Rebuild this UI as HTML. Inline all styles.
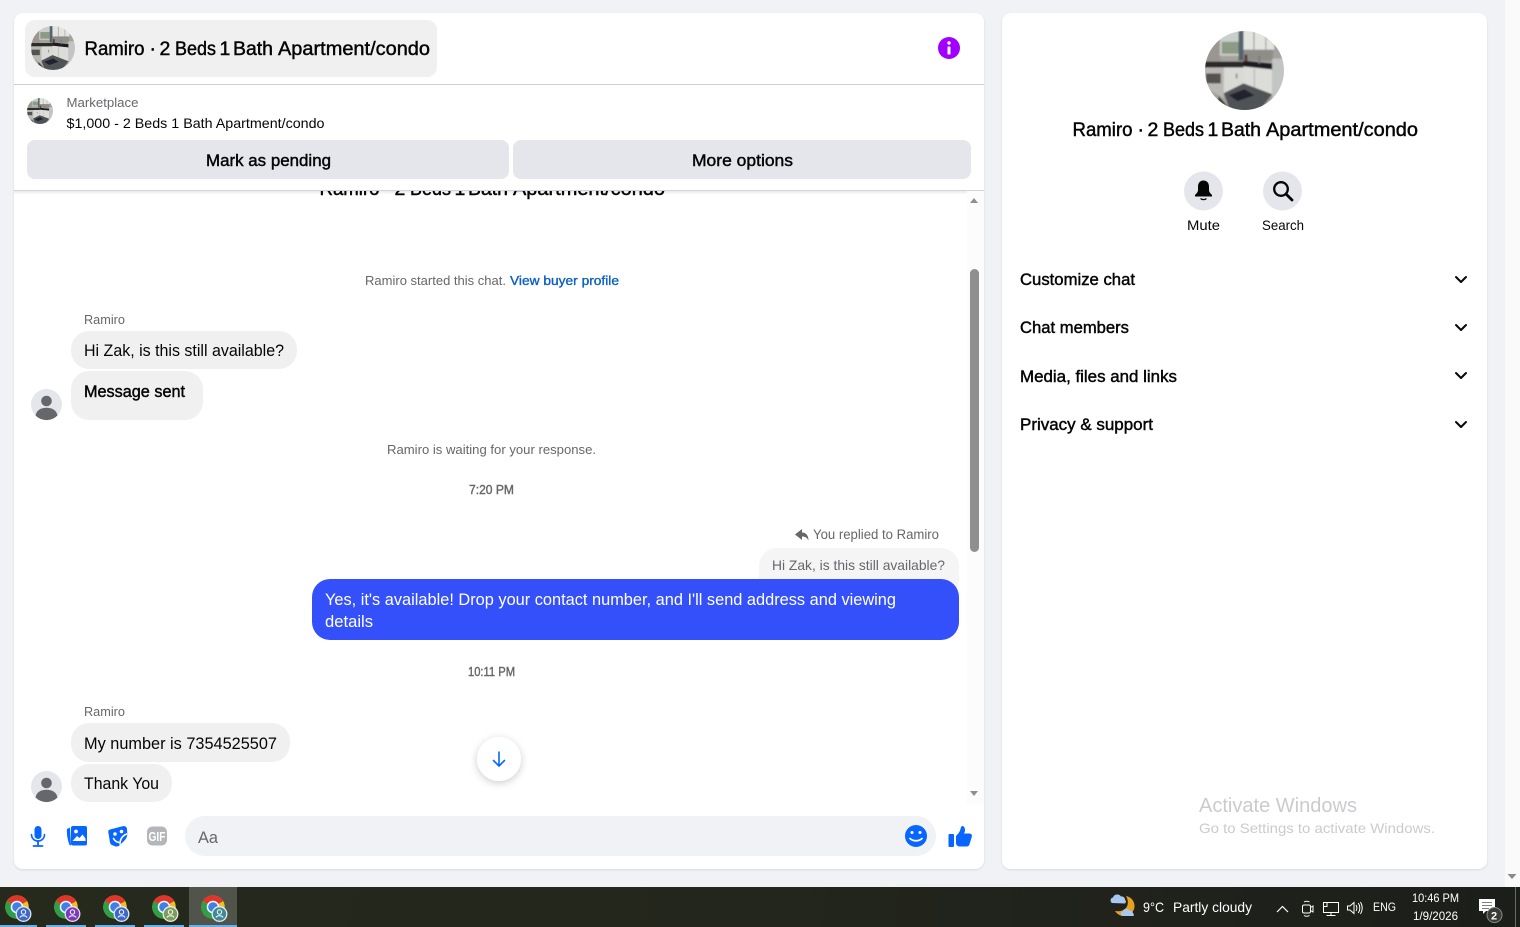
<!DOCTYPE html>
<html><head><meta charset="utf-8"><title>Chat</title>
<style>
html,body{margin:0;padding:0;width:1520px;height:927px;overflow:hidden;background:#f0f2f5}
svg{display:block}
text{font-family:"Liberation Sans",sans-serif;fill:#050505;white-space:pre}
.sb{stroke:#050505;stroke-width:.45}
.g{fill:#65676b}
.gs{fill:#65676b;stroke:#65676b;stroke-width:.4}
</style></head><body>
<svg width="1520" height="927" viewBox="0 0 1520 927" xmlns="http://www.w3.org/2000/svg">
<defs>
<clipPath id="kc"><circle cx="40" cy="40" r="40"/></clipPath>
<clipPath id="top"><rect x="14" y="191" width="950" height="9"/></clipPath>
<filter id="sh" x="-40%" y="-40%" width="180%" height="180%"><feDropShadow dx="0" dy="2" stdDeviation="4" flood-color="#000" flood-opacity=".2"/></filter>
<filter id="sh2" x="-2%" y="-2%" width="104%" height="104%"><feDropShadow dx="0" dy="1" stdDeviation="1" flood-color="#000" flood-opacity=".1"/></filter>
<filter id="bl"><feGaussianBlur stdDeviation=".7"/></filter>
<linearGradient id="hs" x1="0" x2="0" y1="0" y2="1"><stop offset="0" stop-color="#000" stop-opacity=".08"/><stop offset="1" stop-color="#000" stop-opacity="0"/></linearGradient>
<g id="kitchen"><g clip-path="url(#kc)"><g filter="url(#bl)">
<rect x="-2" y="-2" width="84" height="84" fill="#a5a29c"/>
<rect x="-2" y="-2" width="18" height="34" fill="#9b9790"/>
<rect x="15" y="-2" width="20" height="27" fill="#c9cfca"/>
<rect x="17" y="11" width="17" height="12" fill="#8d9a84"/>
<rect x="34" y="-2" width="5" height="32" fill="#55636c"/>
<rect x="39" y="-2" width="31" height="21" fill="#e3e3e0"/>
<rect x="49" y="-2" width="1.200" height="21" fill="#9c9c98"/><rect x="61" y="-2" width="1.200" height="21" fill="#a3a39f"/>
<rect x="39" y="19" width="30" height="11" fill="#8f8d88"/>
<rect x="-2" y="31" width="41" height="6" fill="#2a2a2c"/>
<path d="M39 30 69 33V39L39 36Z" fill="#1f1f22"/>
<rect x="40" y="24" width="3" height="7" fill="#5b3a36"/>
<rect x="54" y="25" width="2" height="8" fill="#7d7d7d"/>
<path d="M-2 37H19V68L-2 56Z" fill="#b9b8b4"/>
<rect x="1" y="43" width="15" height="10" fill="#55534f"/>
<path d="M19 37H39V54L19 63Z" fill="#d9d9d5"/>
<path d="M39 36 68 39V64L39 53Z" fill="#dcdcd8"/>
<path d="M50 38V58" stroke="#a5a5a0" stroke-width=".8"/>
<rect x="31" y="43" width="2" height="5" fill="#9a9a95"/>
<path d="M68 28H82V82H68Z" fill="#c3c5c4"/>
<path d="M19 63 39 53 68 64 54 82H26Z" fill="#4f5254"/>
<path d="M24 65 40 59 50 65 33 71Z" fill="#20232e"/>
<path d="M14 66 28 82H10Z" fill="#3d3d3b"/>
</g></g></g>
<g id="person"><circle cx="15.500" cy="15.500" r="15.500" fill="#e4e6eb"/><circle cx="15.500" cy="12" r="5.300" fill="#65676b"/><path d="M4.500 26.500C5.500 21 10 18.700 15.500 18.700S25.500 21 26.500 26.500A15.500 15.500 0 0 1 4.500 26.500Z" fill="#65676b"/></g>
<g id="chev"><path d="M-5-2.500 0 2.500 5-2.500" fill="none" stroke="#050505" stroke-width="2" stroke-linecap="round" stroke-linejoin="round"/></g>
<g id="chrome">
<circle r="11.800" fill="#eec21c"/>
<path d="M0 0-10.200-5.900A11.800 11.800 0 0 1 10.200-5.900Z" fill="#e0352b"/>
<path d="M0 0-10.200-5.900A11.800 11.800 0 0 0 0 11.800L3 5Z" fill="#2f9e48"/>
<circle r="6.300" fill="#f5f5f5"/><circle r="4.800" fill="#3f7fe8"/>
</g>
</defs>

<!-- page -->
<rect width="1520" height="927" fill="#f0f2f5"/>
<rect x="1505" y="0" width="15" height="887" fill="#fafafa"/>
<path d="M1507.500 874h9l-4.500 5z" fill="#8a8a8a"/>

<!-- cards -->
<rect x="14" y="13" width="970" height="856" rx="9" fill="#fff" filter="url(#sh2)"/>
<rect x="1002" y="13" width="485" height="856" rx="9" fill="#fff" filter="url(#sh2)"/>

<!-- chat scrollbar -->
<rect x="967" y="191" width="17" height="614" fill="#fcfcfc"/>
<rect x="970" y="269" width="9" height="283" rx="4.500" fill="#8f8f8f"/>
<path d="M970 203h8l-4-5zM970 791h8l-4 5z" fill="#8f8f8f"/>

<!-- header -->
<rect x="25" y="20" width="412" height="57" rx="10" fill="#f0f0f1"/>
<use href="#kitchen" transform="translate(31 26) scale(.55)"/>
<g font-size="19.500" class="sb">
<text x="84.500" y="55" textLength="60" lengthAdjust="spacingAndGlyphs">Ramiro</text>
<text x="149.500" y="55">·</text>
<text x="159.500" y="55">2</text>
<text x="175" y="55" textLength="41" lengthAdjust="spacingAndGlyphs">Beds</text>
<text x="219.500" y="55">1</text>
<text x="233" y="55" textLength="40" lengthAdjust="spacingAndGlyphs">Bath</text>
<text x="278" y="55" textLength="152" lengthAdjust="spacingAndGlyphs">Apartment/condo</text>
</g>
<circle cx="949" cy="48" r="11" fill="#a100ff"/>
<circle cx="949" cy="43" r="1.700" fill="#fff"/><rect x="947.500" y="46.500" width="3" height="8" rx=".8" fill="#fff"/>
<rect x="14" y="84" width="970" height="1" fill="#ced0d4"/>

<use href="#kitchen" transform="translate(27 98) scale(.325)"/>
<text x="66.500" y="107" font-size="13" textLength="72" lengthAdjust="spacingAndGlyphs" class="g">Marketplace</text>
<text x="66.500" y="128" font-size="14" textLength="258" lengthAdjust="spacingAndGlyphs">$1,000 - 2 Beds 1 Bath Apartment/condo</text>
<rect x="27" y="140" width="482" height="39" rx="8" fill="#e4e6eb"/>
<rect x="513" y="140" width="458" height="39" rx="8" fill="#e4e6eb"/>
<text x="206" y="166" font-size="17" textLength="125" lengthAdjust="spacingAndGlyphs" class="sb">Mark as pending</text>
<text x="692" y="166" font-size="17" textLength="101" lengthAdjust="spacingAndGlyphs" class="sb">More options</text>
<rect x="14" y="190" width="970" height="1" fill="#d2d4d8"/>

<!-- messages -->
<g clip-path="url(#top)" font-size="19.500" class="sb">
<text x="319.500" y="195" textLength="60" lengthAdjust="spacingAndGlyphs">Ramiro</text>
<text x="384.500" y="195">·</text>
<text x="394.500" y="195">2</text>
<text x="410" y="195" textLength="41" lengthAdjust="spacingAndGlyphs">Beds</text>
<text x="454.500" y="195">1</text>
<text x="468" y="195" textLength="40" lengthAdjust="spacingAndGlyphs">Bath</text>
<text x="513" y="195" textLength="152" lengthAdjust="spacingAndGlyphs">Apartment/condo</text>
</g>
<rect x="14" y="191" width="953" height="4" fill="url(#hs)"/>
<text x="365" y="285" font-size="13" textLength="141" lengthAdjust="spacingAndGlyphs" class="g">Ramiro started this chat.</text>
<text x="510" y="285" font-size="13" textLength="109" lengthAdjust="spacingAndGlyphs" style="fill:#0a5fc4;stroke:#0a5fc4;stroke-width:.35">View buyer profile</text>

<text x="84" y="324" font-size="12.500" textLength="41" lengthAdjust="spacingAndGlyphs" class="g">Ramiro</text>
<rect x="71" y="331" width="226" height="38" rx="18" fill="#f0f0f0"/>
<text x="84" y="356" font-size="17" textLength="200" lengthAdjust="spacingAndGlyphs">Hi Zak, is this still available?</text>
<rect x="71" y="371" width="132" height="49" rx="18" fill="#f0f0f0"/>
<text x="84" y="397" font-size="17" textLength="101" lengthAdjust="spacingAndGlyphs" class="sb">Message sent</text>
<use href="#person" transform="translate(31 389)"/>

<text x="387" y="454" font-size="13" textLength="209" lengthAdjust="spacingAndGlyphs" class="g">Ramiro is waiting for your response.</text>
<text x="469" y="494" font-size="12.500" textLength="45" lengthAdjust="spacingAndGlyphs" class="gs">7:20 PM</text>

<path d="M795 534.500 802 529v3.500c4 0 6.500 3 6.500 8-1.500-3-3.500-4-6.500-4V540z" fill="#65676b"/>
<text x="813" y="539" font-size="13.500" textLength="126" lengthAdjust="spacingAndGlyphs" class="g">You replied to Ramiro</text>
<rect x="759" y="548" width="200" height="50" rx="18" fill="#f5f5f5"/>
<text x="772" y="570" font-size="14" textLength="173" lengthAdjust="spacingAndGlyphs" class="g">Hi Zak, is this still available?</text>
<rect x="312" y="579" width="647" height="61" rx="18" fill="#3450fb"/>
<text x="325" y="605" font-size="17" textLength="571" lengthAdjust="spacingAndGlyphs" style="fill:#fff">Yes, it's available! Drop your contact number, and I'll send address and viewing</text>
<text x="325" y="627" font-size="17" textLength="48" lengthAdjust="spacingAndGlyphs" style="fill:#fff">details</text>

<text x="468" y="676" font-size="12.500" textLength="47" lengthAdjust="spacingAndGlyphs" class="gs">10:11 PM</text>

<text x="84" y="716" font-size="12.500" textLength="41" lengthAdjust="spacingAndGlyphs" class="g">Ramiro</text>
<rect x="71" y="723" width="219" height="39" rx="18" fill="#f0f0f0"/>
<text x="84" y="749" font-size="17" textLength="193" lengthAdjust="spacingAndGlyphs">My number is 7354525507</text>
<rect x="71" y="764" width="101" height="38" rx="18" fill="#f0f0f0"/>
<text x="84" y="789" font-size="17" textLength="75" lengthAdjust="spacingAndGlyphs">Thank You</text>
<use href="#person" transform="translate(31 771)"/>

<circle cx="499" cy="759" r="22" fill="#fff" filter="url(#sh)"/>
<path d="M499 752v14M493.500 760.500 499 766l5.500-5.500" fill="none" stroke="#0866ff" stroke-width="1.600" stroke-linecap="round" stroke-linejoin="round"/>

<!-- composer -->
<rect x="34.500" y="826" width="7" height="13" rx="3.500" fill="#0866ff"/>
<path d="M31.500 834.500c0 4 3 6.500 6.500 6.500s6.500-2.500 6.500-6.500" fill="none" stroke="#0866ff" stroke-width="1.600" stroke-linecap="round"/>
<path d="M38 841v4M33.500 846h9" fill="none" stroke="#0866ff" stroke-width="1.800" stroke-linecap="round"/>

<path d="M70 827.500 67 829c-.5 4 .5 11 2.500 16l1.500.5z" fill="#0866ff"/>
<rect x="71" y="826" width="16" height="19.500" rx="2" fill="#0866ff"/>
<circle cx="76" cy="831.500" r="1.900" fill="#fff"/>
<path d="M72.500 841 77 836l2.500 2 3-3.500 3 4V841z" fill="#fff"/>

<path d="M110 829.500 122.500 826.300Q126.500 825.500 127 829L127.300 834Q127.300 838 124 841L120 845Q118 847.200 115 846.200L112.500 845.300Q110.500 844.500 110 842.500L108.300 832Q108 830 110 829.500Z" fill="#0866ff"/>
<circle cx="115" cy="834" r="1.800" fill="#fff"/><circle cx="121.500" cy="831.500" r="1.800" fill="#fff"/>
<path d="M113.500 838.500c1.300 2.300 3 3.500 5 3.800M120 844c0-4.500 2-8 6.500-10" fill="none" stroke="#fff" stroke-width="1.600" stroke-linecap="round"/>

<rect x="147" y="826.500" width="20" height="19" rx="5.500" fill="#b4b6ba"/>
<text x="148.500" y="841" font-size="13" textLength="17" lengthAdjust="spacingAndGlyphs" font-weight="700" style="fill:#fff">GIF</text>

<rect x="185" y="816" width="751" height="40" rx="20" fill="#f0f2f5"/>
<text x="198" y="843" font-size="17" textLength="20" lengthAdjust="spacingAndGlyphs" class="g">Aa</text>
<circle cx="916" cy="836" r="11" fill="#0866ff"/>
<circle cx="912" cy="832.500" r="1.500" fill="#fff"/><circle cx="920" cy="832.500" r="1.500" fill="#fff"/>
<path d="M910 838.500c3 3 9 3 12 0" fill="none" stroke="#fff" stroke-width="1.700" stroke-linecap="round"/>
<rect x="948.500" y="834" width="5.500" height="13" rx="1" fill="#0866ff"/>
<path d="M956 836c2-2 4-4.500 4.500-7 .3-1.500.8-3 2-3 1.500 0 2.500 2 2.500 4 0 1.500-.5 2.500-1 3.500h5c2 0 3.500 1.200 2.800 3.200l-2.300 7.500c-.4 1.500-1.500 2.300-3 2.300h-7c-2 0-3.500-1.500-3.500-3.500z" fill="#0866ff"/>

<!-- right panel -->
<use href="#kitchen" transform="translate(1205 31) scale(.9875)"/>
<g font-size="19.500" class="sb">
<text x="1072.500" y="136" textLength="60" lengthAdjust="spacingAndGlyphs">Ramiro</text>
<text x="1137.500" y="136">·</text>
<text x="1147.500" y="136">2</text>
<text x="1163" y="136" textLength="41" lengthAdjust="spacingAndGlyphs">Beds</text>
<text x="1207.500" y="136">1</text>
<text x="1221" y="136" textLength="40" lengthAdjust="spacingAndGlyphs">Bath</text>
<text x="1266" y="136" textLength="152" lengthAdjust="spacingAndGlyphs">Apartment/condo</text>
</g>
<circle cx="1203.500" cy="191" r="19.500" fill="#e4e6eb"/>
<circle cx="1282.500" cy="191" r="19.500" fill="#e4e6eb"/>
<path d="M1203.500 180.500c-3.500 0-5.500 2.700-5.500 6v3.500c0 2-1.500 3.500-3 5v1.500h17V195c-1.500-1.500-3-3-3-5v-3.500c0-3.300-2-6-5.500-6z" fill="#050505"/>
<path d="M1201 198.800c.8 1 4.200 1 5 0" fill="none" stroke="#050505" stroke-width="1.300" stroke-linecap="round"/>
<circle cx="1281" cy="189" r="6.800" fill="none" stroke="#050505" stroke-width="2.300"/>
<path d="M1286 194l6 6" stroke="#050505" stroke-width="2.800" stroke-linecap="round"/>
<text x="1187" y="230" font-size="14" textLength="33" lengthAdjust="spacingAndGlyphs">Mute</text>
<text x="1262" y="230" font-size="14" textLength="42" lengthAdjust="spacingAndGlyphs">Search</text>

<text x="1020" y="285" font-size="17" textLength="115" lengthAdjust="spacingAndGlyphs" class="sb">Customize chat</text>
<text x="1020" y="333" font-size="17" textLength="109" lengthAdjust="spacingAndGlyphs" class="sb">Chat members</text>
<text x="1020" y="382" font-size="17" textLength="157" lengthAdjust="spacingAndGlyphs" class="sb">Media, files and links</text>
<text x="1020" y="430" font-size="17" textLength="133" lengthAdjust="spacingAndGlyphs" class="sb">Privacy &amp; support</text>
<use href="#chev" x="1461" y="279.500"/>
<use href="#chev" x="1461" y="327.500"/>
<use href="#chev" x="1461" y="375.500"/>
<use href="#chev" x="1461" y="424.500"/>

<text x="1199" y="812" font-size="20" textLength="158" lengthAdjust="spacingAndGlyphs" style="fill:#c9cbce">Activate Windows</text>
<text x="1199" y="833" font-size="14" textLength="236" lengthAdjust="spacingAndGlyphs" style="fill:#c9cbce">Go to Settings to activate Windows.</text>

<!-- taskbar -->
<defs><linearGradient id="tb" x1="0" x2="1" y1="0" y2="0"><stop offset="0" stop-color="#262a1d"/><stop offset=".5" stop-color="#23261c"/><stop offset="1" stop-color="#1c1e1a"/></linearGradient></defs>
<rect x="0" y="887" width="1520" height="40" fill="url(#tb)"/>
<rect x="189" y="887" width="48" height="40" fill="#50544a"/>
<g fill="#66b2e8">
<rect x="0" y="925" width="37" height="2"/><rect x="46" y="925" width="40" height="2"/><rect x="95" y="925" width="40" height="2"/><rect x="144" y="925" width="40" height="2"/><rect x="189" y="925" width="48" height="2"/>
</g>
<use href="#chrome" x="17" y="907"/>
<g><circle cx="23.500" cy="914" r="7.300" fill="#3e68c4" stroke="#dfe6f6" stroke-width="1.300"/><circle cx="23.500" cy="912" r="2.200" fill="none" stroke="#fff" stroke-width="1"/><path d="M20 917.500c1-2.300 6-2.300 7 0" fill="none" stroke="#fff" stroke-width="1"/></g>
<use href="#chrome" x="66" y="907"/>
<g><circle cx="72.500" cy="914" r="7.300" fill="#7a3bb8" stroke="#e8dcf4" stroke-width="1.300"/><circle cx="72.500" cy="912" r="2.200" fill="none" stroke="#fff" stroke-width="1"/><path d="M69 917.500c1-2.300 6-2.300 7 0" fill="none" stroke="#fff" stroke-width="1"/></g>
<use href="#chrome" x="115" y="907"/>
<g><circle cx="121.500" cy="914" r="7.300" fill="#3e68c4" stroke="#dfe6f6" stroke-width="1.300"/><circle cx="121.500" cy="912" r="2.200" fill="none" stroke="#fff" stroke-width="1"/><path d="M118 917.500c1-2.300 6-2.300 7 0" fill="none" stroke="#fff" stroke-width="1"/></g>
<use href="#chrome" x="164" y="907"/>
<g><circle cx="170.500" cy="914" r="7.300" fill="#7c9c5e" stroke="#e6eedd" stroke-width="1.300"/><circle cx="170.500" cy="912" r="2.200" fill="none" stroke="#fff" stroke-width="1"/><path d="M167 917.500c1-2.300 6-2.300 7 0" fill="none" stroke="#fff" stroke-width="1"/></g>
<use href="#chrome" x="213" y="907"/>
<g><circle cx="219.500" cy="914" r="7.300" fill="#3f8a96" stroke="#e0eff1" stroke-width="1.300"/><circle cx="219.500" cy="912" r="2.200" fill="none" stroke="#fff" stroke-width="1"/><path d="M216 917.500c1-2.300 6-2.300 7 0" fill="none" stroke="#fff" stroke-width="1"/></g>

<!-- tray -->
<path d="M1126 896c5 1 8.500 5 8.500 10 0 6-5 10-10.500 10-4 0-7-2-9-5 6 1 11-1 12.500-6 .7-3 .3-6-1.500-9z" fill="#e8a020"/>
<path d="M1112 903a3 3 0 0 1 1-5.500 4.500 4.500 0 0 1 8-1 3.300 3.300 0 0 1 4 3.300 2.300 2.300 0 0 1 0 3.700z" fill="#a9c8f0"/>
<path d="M1122 916a2.500 2.500 0 0 1 .5-4.500 4 4 0 0 1 7-1 3 3 0 0 1 3.500 2.800 2 2 0 0 1 .5 2.700z" fill="#a9c8f0"/>
<text x="1143" y="912" font-size="14" textLength="21" lengthAdjust="spacingAndGlyphs" style="fill:#fff">9°C</text>
<text x="1173" y="912" font-size="14" textLength="79" lengthAdjust="spacingAndGlyphs" style="fill:#fff">Partly cloudy</text>
<path d="M1277 912l5.500-5.500 5.500 5.500" fill="none" stroke="#fff" stroke-width="1.200"/>
<g fill="none" stroke="#fff" stroke-width="1">
<rect x="1302.500" y="905" width="8" height="8" rx="1.500"/>
<path d="M1310.500 907.500l2.500-1.500v6l-2.500-1.500M1304 902c1.500-1 4-1 5.500 0M1304 915.500c1.500 1 4 1 5.500 0"/>
<rect x="1323.500" y="902.500" width="15" height="10"/><rect x="1323.500" y="902.500" width="3.500" height="4"/>
<path d="M1331 912.500v3M1326.500 915.500h9"/>
<path d="M1347.500 906h2.500l4-3.500v11l-4-3.500h-2.500zM1356 905c1.200 2 1.200 4 0 6M1358.300 903c2 3 2 7 0 10M1360.500 902c2.300 4 2.300 8 0 12"/>
</g>
<text x="1373" y="911" font-size="12" textLength="23" lengthAdjust="spacingAndGlyphs" style="fill:#fff">ENG</text>
<text x="1412" y="902" font-size="12" textLength="47" lengthAdjust="spacingAndGlyphs" style="fill:#fff">10:46 PM</text>
<text x="1413" y="920" font-size="12" textLength="45" lengthAdjust="spacingAndGlyphs" style="fill:#fff">1/9/2026</text>
<path d="M1479 899h16v12h-9l-3 3v-3h-4z" fill="#fff"/>
<path d="M1482 902.500h10M1482 905.500h10M1482 908.500h7" stroke="#555" stroke-width=".8"/>
<circle cx="1494.500" cy="915" r="7.500" fill="#3a3a38" stroke="#8a8a88" stroke-width="1"/>
<text x="1491" y="919.500" font-size="11" font-weight="700" style="fill:#fff">2</text>
<rect x="1515" y="887" width="1" height="40" fill="#6a6b68"/>
</svg>
</body></html>
